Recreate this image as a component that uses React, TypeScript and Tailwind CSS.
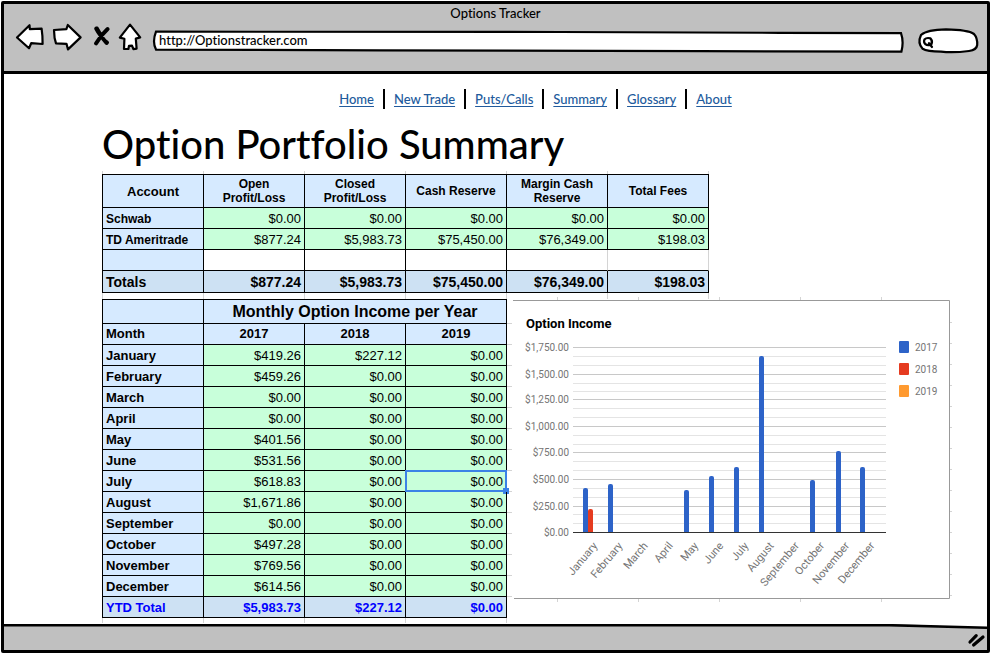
import type { ReactNode } from "react";

const BLUE = "bg-[#d6eaff]";
const GREEN = "bg-[#c8ffda]";
const TOTAL = "bg-[#cde1f3]";
const EDGE = "border-r border-b border-black";
const HEAD = `${EDGE} px-[3px] py-0`;
const CELL = `${EDGE} px-[3px] pt-[2px] pb-0`;

const links = ["Home", "New Trade", "Puts/Calls", "Summary", "Glossary", "About"];

const accountHeads = ["Open Profit/Loss", "Closed Profit/Loss", "Cash Reserve", "Margin Cash Reserve", "Total Fees"];

const accounts = [
  { name: "Schwab", values: ["$0.00", "$0.00", "$0.00", "$0.00", "$0.00"] },
  { name: "TD Ameritrade", values: ["$877.24", "$5,983.73", "$75,450.00", "$76,349.00", "$198.03"] },
];

const accountTotals = ["$877.24", "$5,983.73", "$75,450.00", "$76,349.00", "$198.03"];

const months: { name: string; values: [string, string, string] }[] = [
  { name: "January", values: ["$419.26", "$227.12", "$0.00"] },
  { name: "February", values: ["$459.26", "$0.00", "$0.00"] },
  { name: "March", values: ["$0.00", "$0.00", "$0.00"] },
  { name: "April", values: ["$0.00", "$0.00", "$0.00"] },
  { name: "May", values: ["$401.56", "$0.00", "$0.00"] },
  { name: "June", values: ["$531.56", "$0.00", "$0.00"] },
  { name: "July", values: ["$618.83", "$0.00", "$0.00"] },
  { name: "August", values: ["$1,671.86", "$0.00", "$0.00"] },
  { name: "September", values: ["$0.00", "$0.00", "$0.00"] },
  { name: "October", values: ["$497.28", "$0.00", "$0.00"] },
  { name: "November", values: ["$769.56", "$0.00", "$0.00"] },
  { name: "December", values: ["$614.56", "$0.00", "$0.00"] },
];

function ToolButton({ label, className, viewBox, children }: { label: string; className: string; viewBox: string; children: ReactNode }) {
  return (
    <button type="button" aria-label={label} className={`${className} h-[30px] shrink-0`}>
      <svg viewBox={viewBox} className="block h-full w-full overflow-visible" fill="#fff" stroke="#000" strokeWidth="2.2" strokeLinejoin="round" strokeLinecap="round">
        {children}
      </svg>
    </button>
  );
}

function BrowserHeader() {
  return (
    <header className="border-b-[3px] border-black bg-[#c0c0c0] pb-[18px]">
      <div className="h-[19px] text-center text-[13px] leading-[18px] font-medium">Options Tracker</div>
      <div className="flex items-stretch pr-[9px] pl-3">
        <ToolButton label="Back" className="mr-[9px] w-[28px]" viewBox="16 23 28 30">
          <path d="M17 37.5 L29.5 25.2 L29.8 29.2 L41.6 28.6 L42.4 36 L42.6 44 L31.2 43.2 L29 48.2 Z" />
        </ToolButton>
        <ToolButton label="Forward" className="mr-[11px] w-[28px]" viewBox="53 23 28 30">
          <path d="M54 30 L66.4 29.2 L67.8 25 L80.6 37.4 L68 49.4 L66.5 43.8 L56 43.4 L54.6 38 Z" />
        </ToolButton>
        <ToolButton label="Stop" className="mr-2 w-[18px]" viewBox="92 23 18 30">
          <path d="M96.2 28.6 Q99 34 106.6 43 M107.6 29 Q101 35 96 43.4 M97 28.6 L100 34 M105 41 L107 42.6" strokeWidth="4" fill="none" />
        </ToolButton>
        <ToolButton label="Home" className="mr-[11px] w-[24px]" viewBox="118 23 24 30">
          <path d="M130 24.6 L140.2 37.4 L135.8 38.6 L136.6 48.6 L133.4 49.2 L132 45.6 L129 45.8 L128.4 49 L124 49 L124.4 38.8 L119.8 37.6 Z" />
        </ToolButton>
        <div className="grid h-[30px] min-w-0 flex-1">
          <svg viewBox="153 23 750 30" preserveAspectRatio="none" className="h-[30px] w-full overflow-visible [grid-area:1/1]" aria-hidden="true">
            <path d="M156 31.7 L560 32 L780 32.8 L901 33.2 Q904 42 901.4 51.6 L700 51.2 L380 50.4 L156 49.6 Q152 42 156 31.7 Z" fill="#fff" stroke="#000" strokeWidth="2.2" vectorEffect="non-scaling-stroke" />
          </svg>
          <input
            type="text"
            aria-label="Address"
            defaultValue="http://Optionstracker.com"
            className="relative mt-2 h-[18px] w-full bg-transparent px-[6px] text-[13px] leading-[18px] font-medium outline-none [grid-area:1/1]"
          />
        </div>
        <div className="ml-[15px] grid h-[30px] w-[60px] shrink-0">
          <svg viewBox="918 23 60 30" className="h-[30px] w-[60px] overflow-visible [grid-area:1/1]" aria-hidden="true">
            <path d="M921 35 Q927 29.6 946 29.4 Q968 29.8 974 34 Q977.6 38 977.2 45 Q976.6 50 969 51 Q953 53 941 51.6 Q927 51.6 922.6 48.8 Q917.2 43 921 35 Z" fill="#fff" stroke="#000" strokeWidth="2.2" />
            <path d="M924.4 39.6 Q926.6 37.2 930.4 38.4 Q933 41 931.4 44.2 Q928 46 925.2 44 Q923.4 42 924.4 39.6 Z M929 43.2 L932 47" fill="none" stroke="#000" strokeWidth="2.2" strokeLinecap="round" />
          </svg>
          <input type="search" aria-label="Search" className="relative mt-2 ml-4 h-5 w-10 bg-transparent text-[13px] outline-none [grid-area:1/1]" />
        </div>
      </div>
    </header>
  );
}

function BrowserFooter() {
  return (
    <footer className="flex h-[26px] bg-[#c0c0c0]">
      <svg viewBox="4 625 984 26" preserveAspectRatio="none" className="h-[26px] min-w-0 flex-1" aria-hidden="true">
        <path d="M4 625 L900 625 L988 629 L988 624 L4 624 Z" fill="#fff" />
        <path d="M4 626.2 L890 626.2 L988 628.8" fill="none" stroke="#000" strokeWidth="2.6" vectorEffect="non-scaling-stroke" />
      </svg>
      <svg viewBox="968 625 20 26" className="-ml-5 h-[26px] w-5" aria-hidden="true">
        <path d="M971 643 L977.2 636.6 M974.6 646 L984 638" stroke="#000" strokeWidth="3.2" strokeLinecap="round" />
      </svg>
    </footer>
  );
}

/* Stubs of the sheet's own grid lines that show between the tables. */
function GridStubs({ columns, className }: { columns: number; className: string }) {
  return (
    <div className={`flex ${className}`} aria-hidden="true">
      <div className="w-px bg-[#d4d4d4]" />
      {Array.from({ length: columns }, (_, i) => (
        <div key={i} className="w-[101px] border-r border-[#d4d4d4]" />
      ))}
    </div>
  );
}

function AccountTable() {
  return (
    <table className="w-[607px] table-fixed border-separate border-spacing-0 border-t border-l border-black text-right text-[13px] leading-4">
      <thead>
        <tr className={`h-[33px] text-center ${BLUE}`}>
          <th scope="col" className={`w-[101px] ${CELL}`}>Account</th>
          {accountHeads.map((h) => (
            <th key={h} scope="col" className={`w-[101px] text-[12px] leading-[14px] ${HEAD}`}>
              <span className="mx-auto block max-w-[84px]">{h}</span>
            </th>
          ))}
        </tr>
      </thead>
      <tbody>
        {accounts.map((a) => (
          <tr key={a.name} className={`h-[21px] ${GREEN}`}>
            <th scope="row" className={`text-left text-[12px] whitespace-nowrap ${CELL} ${BLUE}`}>{a.name}</th>
            {a.values.map((v, i) => (
              <td key={i} className={CELL}>{v}</td>
            ))}
          </tr>
        ))}
        <tr className="h-[21px]">
          <td className={`${CELL} ${BLUE}`} />
          {[0, 1, 2].map((i) => (
            <td key={i} className={CELL} />
          ))}
          {[3, 4].map((i) => (
            <td key={i} className="border-r border-b border-r-[#d4d4d4] border-b-black" />
          ))}
        </tr>
        <tr className={`h-[22px] text-[14px] font-bold ${TOTAL}`}>
          <th scope="row" className={`text-left ${HEAD}`}>Totals</th>
          {accountTotals.map((v, i) => (
            <td key={i} className={HEAD}>{v}</td>
          ))}
        </tr>
      </tbody>
    </table>
  );
}

function IncomeTable() {
  return (
    <table className="w-[405px] shrink-0 table-fixed border-separate border-spacing-0 border-t border-l border-black text-right text-[13px] leading-4">
      <colgroup>
        <col className="w-[101px]" />
        <col className="w-[101px]" />
        <col className="w-[101px]" />
        <col className="w-[101px]" />
      </colgroup>
      <thead className={BLUE}>
        <tr className="h-[24px]">
          <td className={HEAD} />
          <th colSpan={3} className={`text-center text-[16px] ${HEAD}`}>Monthly Option Income per Year</th>
        </tr>
        <tr className="h-[21px] text-center">
          <th scope="col" className={`text-left ${HEAD}`}>Month</th>
          <th scope="col" className={HEAD}>2017</th>
          <th scope="col" className={HEAD}>2018</th>
          <th scope="col" className={HEAD}>2019</th>
        </tr>
      </thead>
      <tbody>
        {months.map((m) => (
          <tr key={m.name} className={`h-[21px] ${GREEN}`}>
            <th scope="row" className={`text-left ${CELL} ${BLUE}`}>{m.name}</th>
            {m.values.map((v, i) => (
              <td key={i} className={`relative ${CELL}`}>
                {v}
                {m.name === "July" && i === 2 && (
                  <>
                    <span className="absolute -inset-px border-2 border-[#3b82e6]" />
                    <span className="absolute -right-[3px] -bottom-[3px] size-[6px] bg-[#3b82e6]" />
                  </>
                )}
              </td>
            ))}
          </tr>
        ))}
        <tr className={`h-[21px] font-bold text-[#0000ff] ${TOTAL}`}>
          <th scope="row" className={`text-left ${CELL}`}>YTD Total</th>
          <td className={CELL}>$5,983.73</td>
          <td className={CELL}>$227.12</td>
          <td className={CELL}>$0.00</td>
        </tr>
      </tbody>
    </table>
  );
}

const gridLines = [347, 356, 365, 374, 383, 391, 399, 408, 417, 426, 435, 444, 452, 461, 470, 479, 488, 497, 506, 514, 523];
const axisLabels = ["$1,750.00", "$1,500.00", "$1,250.00", "$1,000.00", "$750.00", "$500.00", "$250.00", "$0.00"];
const axisY = [347, 374, 399, 426, 452, 479, 506, 532];
const bars = [
  { x: 583, top: 488, color: "#2d63c8" },
  { x: 588, top: 509, color: "#e53b20" },
  { x: 608, top: 484, color: "#2d63c8" },
  { x: 684, top: 490, color: "#2d63c8" },
  { x: 709, top: 476, color: "#2d63c8" },
  { x: 734, top: 467, color: "#2d63c8" },
  { x: 759, top: 356, color: "#2d63c8" },
  { x: 810, top: 480, color: "#2d63c8" },
  { x: 836, top: 451, color: "#2d63c8" },
  { x: 860, top: 467, color: "#2d63c8" },
];
const legend = [
  { label: "2017", color: "#2d63c8" },
  { label: "2018", color: "#e53b20" },
  { label: "2019", color: "#ff9a30" },
];
const sideTicks = [323, 344, 365, 386, 407, 428, 449, 470, 491, 512, 533, 554, 575, 596];

function IncomeChart() {
  return (
    <svg viewBox="510 299 443 303" role="img" aria-label="Option Income" className="h-auto max-w-[443px] min-w-0 flex-1 overflow-visible font-[Roboto,sans-serif]">
      <g fill="#d4d4d4">
        {[557, 638, 719, 800, 881].map((x) => (
          <g key={x}>
            <rect x={x} y="297" width="1" height="3" />
            <rect x={x} y="599" width="1" height="3" />
          </g>
        ))}
        {sideTicks.map((y) => (
          <g key={y}>
            <rect x="507" y={y} width="5" height="1" />
            <rect x="950" y={y - 1} width="2" height="1" />
          </g>
        ))}
      </g>
      <path d="M513 300.5 H949.5 V598.5 H514" fill="none" stroke="#999" />
      <text x="526" y="328" fontSize="13" fontWeight="700" fill="#000">Option Income</text>
      {gridLines.map((y) => (
        <rect key={y} x="573" y={y} width="313" height="1" fill={axisY.includes(y) ? "#c8c8c8" : "#e4e4e4"} />
      ))}
      {axisLabels.map((t, i) => (
        <text key={t} x="569" y={axisY[i] + 4} fontSize="10" textAnchor="end" fill="#757575">{t}</text>
      ))}
      {bars.map((b) => (
        <path key={b.x} d={`M${b.x} 532 V${b.top + 2} q0 -2 2 -2 h1 q2 0 2 2 V532 Z`} fill={b.color} />
      ))}
      <rect x="573" y="532" width="313" height="1" fill="#333" />
      {months.map((m, i) => {
        const x = 598 + i * 25.2;
        return (
          <text key={m.name} x={x} y="546" fontSize="11" textAnchor="end" fill="#757575" transform={`rotate(-50 ${x} 546)`}>
            {m.name}
          </text>
        );
      })}
      {legend.map((l, i) => (
        <g key={l.label}>
          <rect x="899" y={341 + i * 22} width="10" height="12" rx="1" fill={l.color} />
          <text x="915" y={351 + i * 22} fontSize="10" fill="#757575">{l.label}</text>
        </g>
      ))}
    </svg>
  );
}

export default function App() {
  return (
    <div className="px-px pt-px pb-px">
      <div className="rounded-[2px] border-[3px] border-black bg-white font-[Lato,sans-serif] text-black [font-variant-ligatures:none]">
        <BrowserHeader />
        <main className="pt-[15px] pb-px pl-[98px]">
          <nav className="-ml-[98px] flex justify-center pl-20 text-[13px] leading-5 font-medium">
            {links.map((l) => (
              <div key={l} className="border-l-2 border-black px-[9px] first:border-l-0">
                <a href="#" className="text-[#215a9c] underline underline-offset-2">{l}</a>
              </div>
            ))}
          </nav>
          <h1 className="pt-2 text-[40px] leading-[54px] font-medium">Option Portfolio Summary</h1>
          <div className="font-['Liberation_Sans',Arial,sans-serif]">
            <GridStubs columns={6} className="h-[3px]" />
            <AccountTable />
            <GridStubs columns={6} className="h-[6px]" />
            <div className="flex items-start gap-[3px]">
              <IncomeTable />
              <IncomeChart />
            </div>
            <GridStubs columns={4} className="h-[5px]" />
          </div>
        </main>
        <BrowserFooter />
      </div>
    </div>
  );
}
